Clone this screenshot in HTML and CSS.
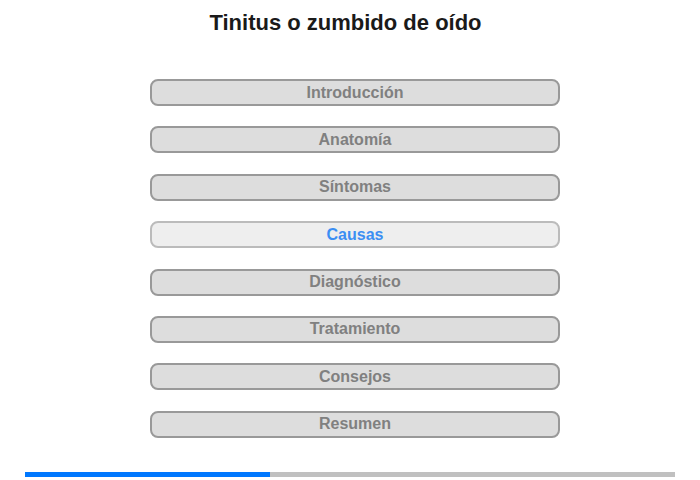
FILE: index.html
```html
<!DOCTYPE html>
<html lang="es">
<head>
  <meta charset="UTF-8" />
  <title>Tinitus o zumbido de oído</title>
  <link rel="stylesheet" href="styles.css">
</head>
<body>
  <div class="page">
    <h1 class="title">Tinitus o zumbido de oído</h1>

    <nav class="menu">
      <button class="menu-item">Introducción</button>
      <button class="menu-item">Anatomía</button>
      <button class="menu-item">Síntomas</button>
      <button class="menu-item active">Causas</button>
      <button class="menu-item">Diagnóstico</button>
      <button class="menu-item">Tratamiento</button>
      <button class="menu-item">Consejos</button>
      <button class="menu-item">Resumen</button>
    </nav>

    <div class="progress">
      <div class="progress-fill" style="width: 37.7%"></div>
    </div>
  </div>
</body>
</html>
```

FILE: styles.css
```css
* {
  margin: 0;
  padding: 0;
  box-sizing: border-box;
}

body {
  font-family: 'Liberation Sans', Arial, sans-serif;
  background: #ffffff;
  color: #222222;
}

.page {
  width: 700px;
  height: 480px;
  display: flex;
  flex-direction: column;
}

.title {
  font-size: 22px;
  font-weight: bold;
  text-align: center;
  color: #1a1a1a;
  padding-top: 10px;
  height: 79px;
  margin-left: -9px;
}

.menu {
  display: flex;
  flex-direction: column;
  gap: 20.4px;
  margin-left: 150px;
  width: 410px;
}

.menu-item {
  height: 27px;
  border: 2px solid #999999;
  border-radius: 8px;
  background: #dddddd;
  color: #808080;
  font-family: inherit;
  font-size: 16px;
  font-weight: bold;
  text-align: center;
  cursor: pointer;
}

.menu-item.active {
  background: #eeeeee;
  border-color: #bbbbbb;
  color: #3c8ef3;
}

.progress {
  margin: 34px 25px 0;
  height: 5px;
  background: #c0c0c0;
}

.progress-fill {
  height: 100%;
  background: #0078ff;
}
```
